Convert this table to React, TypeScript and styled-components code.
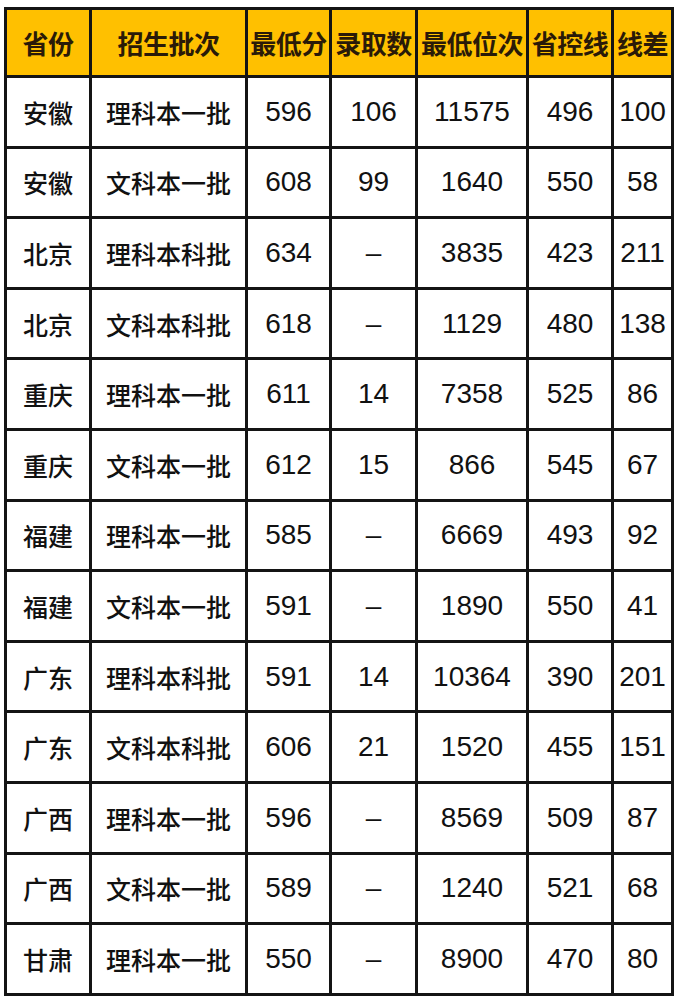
import React from 'react';
import styled, { createGlobalStyle } from 'styled-components';

const GlobalStyle = createGlobalStyle`
  html, body {
    margin: 0;
    padding: 0;
    background: #ffffff;
  }
`;

const headers = ['省份', '招生批次', '最低分', '录取数', '最低位次', '省控线', '线差'];

const rows: string[][] = [
  ['安徽', '理科本一批', '596', '106', '11575', '496', '100'],
  ['安徽', '文科本一批', '608', '99', '1640', '550', '58'],
  ['北京', '理科本科批', '634', '–', '3835', '423', '211'],
  ['北京', '文科本科批', '618', '–', '1129', '480', '138'],
  ['重庆', '理科本一批', '611', '14', '7358', '525', '86'],
  ['重庆', '文科本一批', '612', '15', '866', '545', '67'],
  ['福建', '理科本一批', '585', '–', '6669', '493', '92'],
  ['福建', '文科本一批', '591', '–', '1890', '550', '41'],
  ['广东', '理科本科批', '591', '14', '10364', '390', '201'],
  ['广东', '文科本科批', '606', '21', '1520', '455', '151'],
  ['广西', '理科本一批', '596', '–', '8569', '509', '87'],
  ['广西', '文科本一批', '589', '–', '1240', '521', '68'],
  ['甘肃', '理科本一批', '550', '–', '8900', '470', '80'],
];

const Page = styled.div`
  padding: 7px 0 0 4px;
`;

const Grid = styled.div`
  display: grid;
  width: max-content;
  grid-template-columns: 82px 153px 81px 83px 108px 82px 57px;
  grid-template-rows: 65px;
  grid-auto-rows: 67.6px;
  gap: 3px;
  padding: 3px;
  background: #141414;
`;

const HeadCell = styled.div`
  display: flex;
  align-items: center;
  justify-content: center;
  background: #ffc000;
  color: #2a1a08;
  font-family: 'Noto Sans CJK SC', 'Noto Sans', sans-serif;
  font-weight: 700;
  font-size: 26px;
  white-space: nowrap;
  letter-spacing: -0.5px;
`;

const Cell = styled.div<{ $cjk?: boolean }>`
  display: flex;
  align-items: center;
  justify-content: center;
  background: #ffffff;
  color: #111111;
  white-space: nowrap;
  font-family: ${(p) =>
    p.$cjk
      ? "'Noto Sans CJK SC', 'Noto Sans', sans-serif"
      : "'Liberation Sans', Arial, sans-serif"};
  font-weight: ${(p) => (p.$cjk ? 500 : 400)};
  font-size: ${(p) => (p.$cjk ? '25px' : '28px')};
`;

export default function App() {
  return (
    <Page>
      <GlobalStyle />
      <Grid>
        {headers.map((h) => (
          <HeadCell key={h}>{h}</HeadCell>
        ))}
        {rows.map((row, i) =>
          row.map((value, j) => (
            <Cell key={`${i}-${j}`} $cjk={j < 2}>
              {value}
            </Cell>
          ))
        )}
      </Grid>
    </Page>
  );
}
